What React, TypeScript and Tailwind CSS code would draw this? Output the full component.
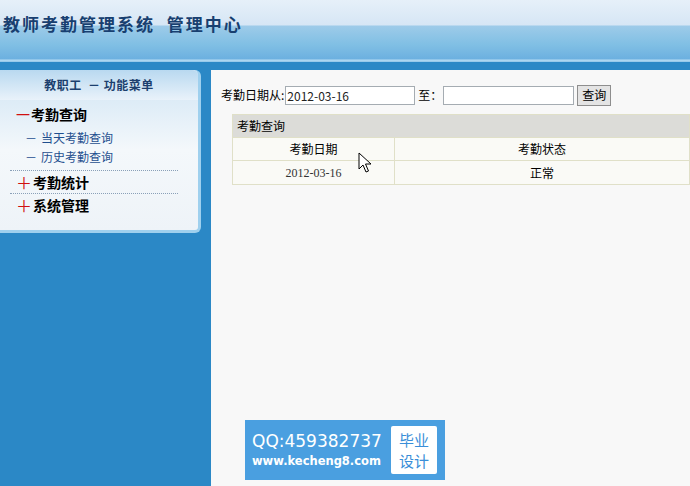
import React from "react";

const font = "font-['SimSun','Noto_Sans_CJK_SC',sans-serif]";

const Cursor = () => (
  <svg width="14" height="22" viewBox="0 0 14 22" className="absolute left-[358px] top-[152px]">
    <path d="M1 1 L1 17 L5 13 L8 20 L10.5 19 L7.5 12 L13 12 Z" fill="#fff" stroke="#000" strokeWidth="1" />
  </svg>
);

const Sidebar = () => (
  <div className="w-[211px] shrink-0 bg-[#2b88c6] pt-0">
    <div className="mr-[10px] h-[163px] rounded-r-[6px] border-r-[3px] border-b-[3px] border-[#9fd0ee] bg-gradient-to-b from-[#cfe4f4] via-[#f4f8fb] to-[#eef3f8]">
      <div className="flex h-[30px] items-center justify-center rounded-tr-[6px] bg-gradient-to-b from-[#b9d9f0] to-[#e9f2fa] text-[12px] font-bold tracking-[0.5px] text-[#1c3f6e]">
        教职工&nbsp;&nbsp;－&nbsp;功能菜单
      </div>
      <div className="pl-[16px] pt-[4px]">
        <div className="flex h-[20px] items-center text-[14px] font-bold text-black">
          <span className="mr-[1px] font-normal text-[#d01010]">一</span>考勤查询
        </div>
        <div className="mt-[4px] flex h-[19px] items-center pl-[9px] text-[12px] text-[#1f4f8f]">
          <span className="mr-[4px]">－</span>当天考勤查询
        </div>
        <div className="flex h-[19px] items-center pl-[9px] text-[12px] text-[#1f4f8f]">
          <span className="mr-[4px]">－</span>历史考勤查询
        </div>
        <div className="ml-[-6px] mr-[20px] mt-[4px] border-t border-dotted border-[#8aa0b8]" />
        <div className="flex h-[22px] items-center text-[14px] font-bold text-black">
          <span className="mr-[1px] text-[16px] font-normal text-[#d01010]">＋</span>考勤统计
        </div>
        <div className="ml-[-6px] mr-[20px] border-t border-dotted border-[#8aa0b8]" />
        <div className="flex h-[22px] items-center text-[14px] font-bold text-black">
          <span className="mr-[1px] text-[16px] font-normal text-[#d01010]">＋</span>系统管理
        </div>
      </div>
    </div>
  </div>
);

const Main = () => (
  <div className="relative flex-1 bg-[#f8f8f8] pl-[10px] pt-[15px] text-[12px] text-black">
    <div className="flex h-[20px] items-center">
      <span>考勤日期从:</span>
      <input
        readOnly
        value="2012-03-16"
        className="ml-[1px] h-[19px] w-[130px] border border-[#a5acb2] bg-white px-[1px] text-[12px] text-[#222] outline-none"
      />
      <span className="ml-[3px]">至：</span>
      <input readOnly className="ml-[1px] h-[19px] w-[131px] border border-[#a5acb2] bg-white outline-none" />
      <button className="ml-[3px] h-[21px] w-[34px] border border-[#8e8e8e] bg-[#e4e4e4] text-[12px]">查询</button>
    </div>
    <div className="ml-[11px] mt-[9px] border border-[#e0e0c8]">
      <div className="flex h-[22px] items-center bg-[#dcdcd8] pl-[4px]">考勤查询</div>
      <div className="grid grid-cols-[162px_1fr] bg-[#fafaf6]">
        <div className="flex h-[23px] items-center justify-center border-t border-r border-[#e0e0c8]">考勤日期</div>
        <div className="flex h-[23px] items-center justify-center border-t border-[#e0e0c8]">考勤状态</div>
        <div className="flex h-[24px] items-center justify-center border-t border-r border-[#e0e0c8] font-['Liberation_Serif',serif] text-[#333]">
          2012-03-16
        </div>
        <div className="flex h-[24px] items-center justify-center border-t border-[#e0e0c8]">正常</div>
      </div>
    </div>
    <div className="absolute left-[34px] top-[350px] flex h-[60px] w-[200px] items-center bg-[#4a9fe0] pl-[7px] font-['DejaVu_Sans',sans-serif] text-white">
      <div className="flex w-[133px] flex-col">
        <span className="text-[17px] leading-[20px]">QQ:459382737</span>
        <span className="mt-[2px] text-[11.5px] font-bold leading-[16px]">www.kecheng8.com</span>
      </div>
      <div className="ml-[6px] flex h-[48px] w-[46px] flex-col items-center justify-center rounded-[2px] bg-white font-['Noto_Sans_CJK_SC',sans-serif] text-[15px] leading-[21px] text-[#3a8ed8]">
        <span>毕业</span>
        <span>设计</span>
      </div>
    </div>
  </div>
);

export default function App() {
  return (
    <div className={`relative h-[486px] w-[690px] overflow-hidden ${font}`}>
      <div className="h-[62px] bg-[linear-gradient(to_bottom,#e6f0f9_0px,#d6e6f5_25px,#9dcbe9_26px,#80bfe4_45px,#6cb0e0_59px,#b6dcf3_60px,#8ec4e8_62px)] pl-[3px]">
        <div className="pt-[11px] text-[17px] font-bold tracking-[2px] text-[#183f70]">
          教师考勤管理系统&nbsp;&nbsp;管理中心
        </div>
      </div>
      <div className="h-[8px] bg-[#2b88c6]" />
      <div className="flex h-[416px]">
        <Sidebar />
        <Main />
      </div>
      <Cursor />
    </div>
  );
}
